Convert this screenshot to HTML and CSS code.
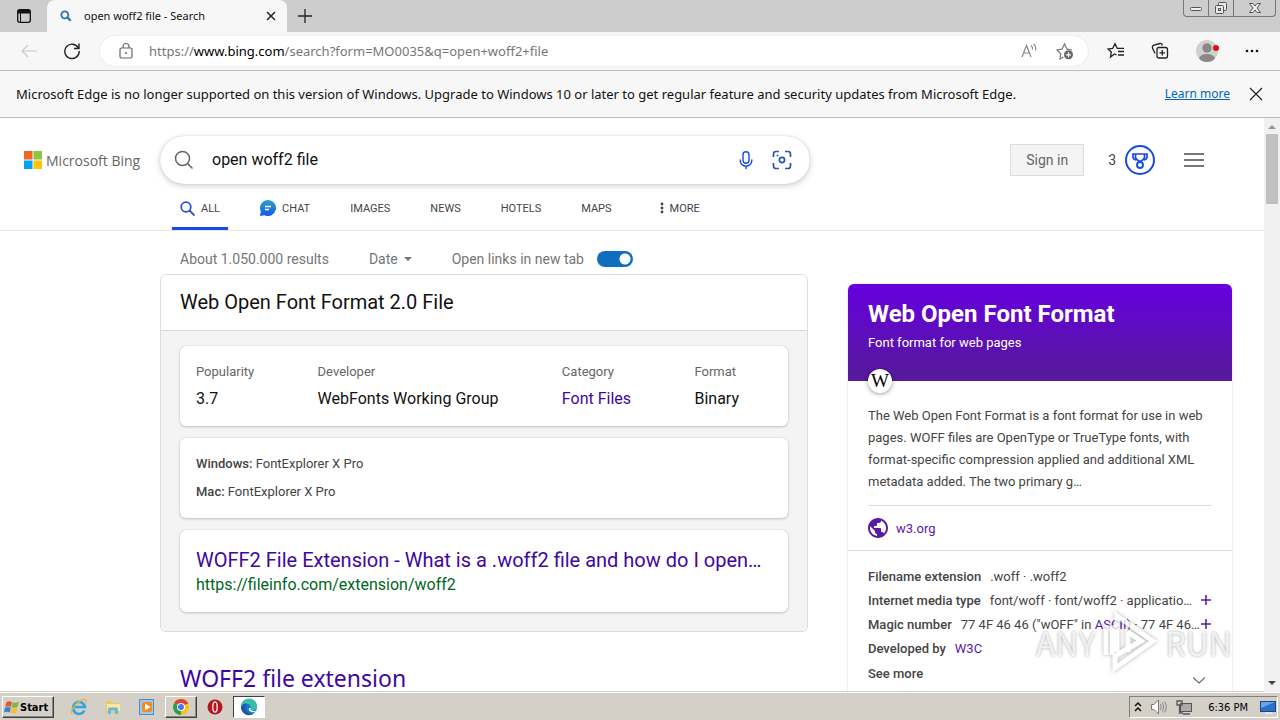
FILE: index.html
```html
<!DOCTYPE html>
<html lang="en">
<head>
  <meta charset="UTF-8">
  <meta name="viewport" content="width=device-width, initial-scale=1.0">
  <title>open woff2 file - Search</title>
  <link rel="stylesheet" href="styles.css">
</head>
<body>
  <!-- Browser tabs -->
  <div class="tab-bar">
    <button class="tab-actions" aria-label="Tab actions">
      <svg width="16" height="16" viewBox="0 0 16 16"><rect x="1.700" y="1.700" width="12.600" height="12.600" rx="2" fill="none" stroke="#111" stroke-width="1.300"/><path d="M2 2h12v3.500H2z" fill="#111"/><path d="M4.500 5v9" stroke="#111"/></svg>
    </button>
    <div class="tab">
      <svg width="12" height="12" viewBox="0 0 12 12"><circle cx="4.800" cy="4.800" r="3.500" fill="none" stroke="#2f73b8" stroke-width="1.800"/><path d="M7.400 7.400l3.300 3.300" stroke="#2f73b8" stroke-width="2.200"/></svg>
      <span class="tab-title">open woff2 file - Search</span>
      <button class="icon-btn" aria-label="Close tab">
        <svg width="10" height="10" viewBox="0 0 10 10"><path d="M1 1l8 8M9 1L1 9" stroke="#222" stroke-width="1.500"/></svg>
      </button>
    </div>
    <button class="new-tab" aria-label="New tab">
      <svg width="16" height="16" viewBox="0 0 16 16"><path d="M8 1v14M1 8h14" stroke="#222" stroke-width="1.300"/></svg>
    </button>
    <div class="window-controls">
      <button aria-label="Minimize"><svg width="14" height="12" viewBox="0 0 14 12"><rect x="1.500" y="5.500" width="11" height="3" rx="1" fill="#eee" stroke="#555"/></svg></button>
      <button aria-label="Restore"><svg width="14" height="14" viewBox="0 0 14 14"><g fill="#e8e8e8" stroke="#555"><rect x="4.500" y="1.500" width="8" height="8" rx="1"/><rect x="1.500" y="4.500" width="8" height="8" rx="1"/><rect x="4.500" y="7.500" width="2" height="2"/></g></svg></button>
      <button class="wide" aria-label="Close window"><svg width="14" height="12" viewBox="0 0 14 12"><path d="M1.500 1.500h3.500l2 2.500 2-2.500h3.500L9 6l3.500 4.500H9L7 8l-2 2.500H1.500L5 6z" fill="#eee" stroke="#555"/></svg></button>
    </div>
  </div>

  <!-- Address bar -->
  <div class="toolbar">
    <button class="icon-btn" aria-label="Back">
      <svg width="18" height="16" viewBox="0 0 18 16"><path d="M17 8H2M8 2L2 8l6 6" fill="none" stroke="#ccc" stroke-width="1.200"/></svg>
    </button>
    <button class="icon-btn" aria-label="Refresh">
      <svg width="18" height="18" viewBox="0 0 18 18"><path d="M15.500 6.200A7.200 7.200 0 1 0 16.200 9M16 1.500v5h-5" fill="none" stroke="#222" stroke-width="1.400"/></svg>
    </button>
    <div class="address">
      <svg width="16" height="18" viewBox="0 0 16 18"><rect x="2" y="6" width="12" height="10" rx="1.500" fill="none" stroke="#666" stroke-width="1.200"/><path d="M5 6V4.500a3 3 0 0 1 6 0V6" fill="none" stroke="#666" stroke-width="1.200"/><circle cx="8" cy="11" r="1" fill="#666"/></svg>
      <span class="url">https://<b>www.bing.com</b>/search?form=MO0035&amp;q=open+woff2+file</span>
      <button class="icon-btn" aria-label="Read aloud">
        <svg width="18" height="18" viewBox="0 0 18 18"><path d="M2 15L6.500 3.500 11 15M3.600 11h5.800M11 3.500q2 1.500 1.500 4M13.500 2q3 2.500 2 6.500" fill="none" stroke="#888" stroke-width="1.200"/></svg>
      </button>
      <button class="icon-btn" aria-label="Add to favorites">
        <svg width="18" height="18" viewBox="0 0 18 18"><path d="M7.500 15l-3.500 2 .8-5.200L1 8l5-.8L8.500 2 11 7.200l5 .8" fill="none" stroke="#777" stroke-width="1.200"/><circle cx="12.500" cy="12.800" r="4.500" fill="#666"/><path d="M12.500 10.300v5M10 12.800h5" stroke="#fff" stroke-width="1.200"/></svg>
      </button>
    </div>
    <div class="toolbar-actions">
      <button class="icon-btn" aria-label="Favorites">
        <svg width="18" height="18" viewBox="0 0 18 18"><path d="M9.500 13L7.500 12 3.500 15l.8-5L1 7l4.700-.7L8 1.800l2.200 4.500H17M11 9.500h6M11 13h6" fill="none" stroke="#222" stroke-width="1.300"/></svg>
      </button>
      <button class="icon-btn" aria-label="Collections">
        <svg width="18" height="18" viewBox="0 0 18 18"><path d="M4 11.500L1.500 6q-.5-2 1.500-2.800L9 1.500q2-.3 2.500 2" fill="none" stroke="#222" stroke-width="1.300"/><rect x="6" y="5.500" width="10.500" height="10.500" rx="2" fill="#f7f7f7" stroke="#222" stroke-width="1.300"/><path d="M11.200 8v5.500M8.500 10.800H14" stroke="#222" stroke-width="1.300"/></svg>
      </button>
      <button class="icon-btn" aria-label="Profile">
        <svg width="24" height="24" viewBox="0 0 24 24"><clipPath id="avatar"><circle cx="12" cy="12" r="11"/></clipPath><circle cx="12" cy="12" r="11" fill="#d2d0ce"/><g clip-path="url(#avatar)" fill="#8a8886"><circle cx="12" cy="9" r="4.700"/><ellipse cx="12" cy="20" rx="8" ry="5"/></g><circle cx="21" cy="9" r="3" fill="#d8101c"/></svg>
      </button>
      <button class="icon-btn" aria-label="Settings and more">
        <svg width="14" height="4" viewBox="0 0 14 4"><g fill="#111"><circle cx="2" cy="2" r="1.300"/><circle cx="7" cy="2" r="1.300"/><circle cx="12" cy="2" r="1.300"/></g></svg>
      </button>
    </div>
  </div>

  <div class="notice">
    <span class="notice-text">Microsoft Edge is no longer supported on this version of Windows. Upgrade to Windows 10 or later to get regular feature and security updates from Microsoft Edge.</span>
    <a href="#">Learn more</a>
    <button class="icon-btn" aria-label="Dismiss">
      <svg width="14" height="14" viewBox="0 0 14 14"><path d="M1 1l12 12M13 1L1 13" stroke="#222" stroke-width="1.200"/></svg>
    </button>
  </div>

  <div class="viewport">
    <div class="page">
      <header class="page-header">
        <div class="header-top">
          <a class="logo" href="#">
            <svg width="18" height="18" viewBox="0 0 19 19"><path d="M0 0h9v9H0z" fill="#f26522"/><path d="M10 0h9v9h-9z" fill="#8dc63f"/><path d="M0 10h9v9H0z" fill="#00a4ef"/><path d="M10 10h9v9h-9z" fill="#ffc20e"/></svg>
            <span>Microsoft Bing</span>
          </a>
          <form class="search-box">
            <svg width="20" height="20" viewBox="0 0 20 20"><circle cx="8.500" cy="8.500" r="7" fill="none" stroke="#666" stroke-width="1.500"/><path d="M13.500 13.500l5 5" stroke="#666" stroke-width="1.600"/></svg>
            <input type="text" value="open woff2 file" aria-label="Search">
            <button type="button" class="icon-btn" aria-label="Search using voice">
              <svg width="20" height="20" viewBox="0 0 20 20"><rect x="7" y="1.700" width="6" height="11.500" rx="3" fill="none" stroke="#174ae4" stroke-width="1.400"/><path d="M4.200 9.500v1a5.800 5.800 0 0 0 11.600 0v-1M10 16.300V19" fill="none" stroke="#174ae4" stroke-width="1.400"/></svg>
            </button>
            <button type="button" class="icon-btn" aria-label="Search using an image">
              <svg width="20" height="20" viewBox="0 0 20 20"><path d="M1.500 7V4q0-2.500 2.500-2.500h3M13 1.500h3q2.500 0 2.500 2.500v3M18.500 13v3q0 2.500-2.500 2.500h-3M7 18.500H4q-2.500 0-2.500-2.500v-3" fill="none" stroke="#2a55b8" stroke-width="1.700"/><circle cx="10" cy="10" r="2.600" fill="none" stroke="#2a55b8" stroke-width="1.700"/><circle cx="5.500" cy="5.500" r="1" fill="#2a55b8"/></svg>
            </button>
          </form>
          <div class="account">
            <button class="sign-in">Sign in</button>
            <button class="rewards"><span>3</span>
              <svg width="30" height="30" viewBox="0 0 30 30"><g fill="none" stroke="#174ae4"><circle cx="15" cy="15" r="14" stroke-width="2"/><path d="M10.500 9h9v3.500q-1 3-4.500 4-3.500-1-4.500-4zM10.500 9H8v3.500q.5 2 3 2.500M19.500 9H22v3.500q-.5 2-3 2.500" stroke-width="1.700"/><circle cx="15" cy="20" r="3" stroke-width="1.900"/></g></svg>
            </button>
            <button class="icon-btn" aria-label="Menu">
              <svg width="20" height="14" viewBox="0 0 20 14"><path d="M0 1h20M0 7h20M0 13h20" stroke="#767676" stroke-width="2"/></svg>
            </button>
          </div>
        </div>
        <nav class="scopes">
          <a class="active" href="#"><svg width="15" height="15" viewBox="0 0 15 15"><circle cx="6" cy="6" r="4.800" fill="none" stroke="#2a4fd0" stroke-width="1.700"/><path d="M9.500 9.500l5 5" stroke="#2a4fd0" stroke-width="1.900"/></svg>All</a>
          <a href="#"><svg width="16" height="16" viewBox="0 0 16 16"><defs><linearGradient id="chat" x1="0" y1="0" x2="0" y2="1"><stop offset="0" stop-color="#2aa7b8"/><stop offset="1" stop-color="#1557f0"/></linearGradient></defs><path d="M8 0a8 8 0 1 1-3.500 15.200L0 16l.8-4.500A8 8 0 0 1 8 0z" fill="url(#chat)"/><path d="M5 6.500h6M5 9.500h4" stroke="#fff" stroke-width="1.300"/></svg>Chat</a>
          <a href="#">Images</a>
          <a href="#">News</a>
          <a href="#">Hotels</a>
          <a href="#">Maps</a>
          <a class="more" href="#"><svg width="4" height="12" viewBox="0 0 4 12"><g fill="#444"><circle cx="2" cy="2" r="1.400"/><circle cx="2" cy="6" r="1.400"/><circle cx="2" cy="10" r="1.400"/></g></svg>More</a>
        </nav>
      </header>

      <div class="content">
        <main class="results">
          <div class="filters">
            <span>About 1.050.000 results</span>
            <button class="date">Date <svg width="8" height="4" viewBox="0 0 8 4"><path d="M0 0h8L4 4z" fill="#767676"/></svg></button>
            <label class="switch">Open links in new tab <input type="checkbox" checked></label>
          </div>

          <section class="answer">
            <h2>Web Open Font Format 2.0 File</h2>
            <div class="answer-body">
              <dl class="box facts">
                <div><dt>Popularity</dt><dd>3.7</dd></div>
                <div><dt>Developer</dt><dd>WebFonts Working Group</dd></div>
                <div><dt>Category</dt><dd><a href="#">Font Files</a></dd></div>
                <div><dt>Format</dt><dd>Binary</dd></div>
              </dl>
              <div class="box programs">
                <p><b>Windows:</b> FontExplorer X Pro</p>
                <p><b>Mac:</b> FontExplorer X Pro</p>
              </div>
              <div class="box source">
                <h3><a href="#">WOFF2 File Extension - What is a .woff2 file and how do I open…</a></h3>
                <cite>https://fileinfo.com/extension/woff2</cite>
              </div>
            </div>
          </section>

          <h2 class="result-title"><a href="#">WOFF2 file extension</a></h2>
        </main>

        <aside class="entity">
          <div class="entity-head">
            <h2>Web Open Font Format</h2>
            <p>Font format for web pages</p>
            <span class="wiki">W</span>
          </div>
          <div class="entity-about">
            <p>The Web Open Font Format is a font format for use in web pages. WOFF files are OpenType or TrueType fonts, with format-specific compression applied and additional XML metadata added. The two primary g…</p>
            <a class="site" href="#">
              <svg width="20" height="20" viewBox="2 2 20 20"><path d="M12 2C6.480 2 2 6.480 2 12s4.480 10 10 10 10-4.480 10-10S17.520 2 12 2zm-1 17.930c-3.950-.49-7-3.850-7-7.930 0-.62.080-1.210.210-1.790L9 15v1c0 1.100.9 2 2 2v1.930zm6.900-2.540c-.26-.81-1-1.390-1.900-1.390h-1v-3c0-.55-.45-1-1-1H8v-2h2c.55 0 1-.45 1-1V7h2c1.100 0 2-.9 2-2v-.41c2.930 1.190 5 4.060 5 7.410 0 2.080-.8 3.970-2.100 5.390z" fill="#5a1aa8"/></svg>
              w3.org
            </a>
          </div>
          <div class="entity-facts">
            <div class="fact"><b>Filename extension</b><span>.woff · .woff2</span></div>
            <div class="fact"><b>Internet media type</b><span>font/woff · font/woff2 · applicatio…</span><button class="plus" aria-label="Expand media type"><svg width="10" height="10" viewBox="0 0 10 10"><path d="M5 0v10M0 5h10" stroke="#5a1aa8" stroke-width="1.500"/></svg></button></div>
            <div class="fact"><b>Magic number</b><span>77 4F 46 46 ("wOFF" in <a href="#">ASCII</a>) · 77 4F 46…</span><button class="plus" aria-label="Expand magic number"><svg width="10" height="10" viewBox="0 0 10 10"><path d="M5 0v10M0 5h10" stroke="#5a1aa8" stroke-width="1.500"/></svg></button></div>
            <div class="fact"><b>Developed by</b><span><a href="#">W3C</a></span></div>
            <button class="see-more">See more <svg width="12" height="7" viewBox="0 0 12 7"><path d="M0 .5l6 5.500 6-5.500" fill="none" stroke="#666" stroke-width="1.200"/></svg></button>
          </div>
        </aside>
      </div>
    </div>

    <div class="scrollbar">
      <svg width="8" height="16" viewBox="0 0 8 16"><path d="M0 11h8L4 7z" fill="#999"/></svg>
      <div class="thumb"></div>
      <svg width="8" height="16" viewBox="0 0 8 16"><path d="M0 5h8L4 9z" fill="#444"/></svg>
    </div>

    <div class="watermark">
      <span>ANY</span>
      <svg width="58" height="64" viewBox="0 0 58 64"><g fill="none" stroke="#fff" stroke-width="5"><path d="M5 45V18h6v27M16 42V6l36 25-38 27V46l26-15-13-9v20"/></g></svg>
      <span>RUN</span>
    </div>
  </div>

  <!-- Windows taskbar -->
  <footer class="taskbar">
    <button class="start">
      <svg width="16" height="16" viewBox="0 0 16 16"><path d="M2.500 3Q5 1.500 8 3L7 8Q4 6.500 1.200 8z" fill="#e8572a"/><path d="M8.800 3.200q3 1.300 6-.2l-1.200 5q-3 1.500-5.800.2z" fill="#7db83c"/><path d="M1 8.800q3-1.500 5.800 0l-1 4.700Q3 12 0 13.500z" fill="#2f86d8"/><path d="M7.600 9q3 1.300 5.800 0l-1.200 4.800q-3 1.300-5.600-.1z" fill="#f8bc28"/></svg>
      Start
    </button>
    <div class="launchers">
      <button aria-label="Internet Explorer"><svg width="18" height="18" viewBox="0 0 18 18"><path d="M14.500 12.500A6 6 0 1 1 15 9H4.500" fill="none" stroke="#36a3e0" stroke-width="2.600"/><path d="M2 16C-1 13 8 2 14 1.500q3 0 2 3.500" fill="none" stroke="#e5b93b" stroke-width="1.300"/></svg></button>
      <button aria-label="Explorer"><svg width="18" height="18" viewBox="0 0 18 18"><path d="M2 3h6l1 2h6v10H2z" fill="#e8c964"/><path d="M3 6h13v7H3z" fill="#f8e8a0"/><path d="M4 16v-5q0-1.500 1.500-1.500h7Q14 9.500 14 11v5h-3v-3.500H7V16z" fill="#6db6dc"/></svg></button>
      <button aria-label="Media Player"><svg width="18" height="18" viewBox="0 0 18 18"><rect x="1.500" y="1.500" width="14" height="15" fill="#9ec9ee" stroke="#4f8cc6"/><rect x="4" y="4" width="10" height="10" rx="2" fill="#f28a1c"/><path d="M7 5.500l5.500 3.500L7 12.500z" fill="#fff"/></svg></button>
      <button class="raised" aria-label="Chrome"><svg width="18" height="18" viewBox="0 0 18 18"><circle cx="9" cy="9" r="8" fill="#f9c315"/><path d="M9 9L2.100 5A8 8 0 0 1 16 5z" fill="#dd4436"/><path d="M9 9l0 8A8 8 0 0 1 2.100 5z" fill="#2a9f50"/><path d="M9 5h7v1H9z" fill="#dd4436"/><circle cx="9" cy="9" r="4" fill="#fff"/><circle cx="9" cy="9" r="3" fill="#3e7ee8"/></svg></button>
      <button aria-label="Opera"><svg width="18" height="18" viewBox="0 0 18 18"><circle cx="9" cy="9" r="7.500" fill="#b51720"/><ellipse cx="9" cy="9" rx="2.200" ry="5" fill="#b51720" stroke="#f5dada" stroke-width="1.500"/></svg></button>
      <button class="pressed" aria-label="Edge"><svg width="18" height="18" viewBox="0 0 18 18"><circle cx="9" cy="9" r="8" fill="#1678c8"/><path d="M1 9A8 8 0 0 1 17 8q.5 4-4 4-3 0-2.500-2Q11 6 7 6 3 6 1 9z" fill="#35bfa8"/><path d="M1 9q2-4 6-3.500Q3.500 9 6.500 13q2 3 6.500 3A8 8 0 0 1 1 9z" fill="#1b58a5"/><path d="M10.500 10q-.5 2.500 3 3 2 0 3-1-2 3-5 2-3.500-1-2.500-4z" fill="#fff"/></svg></button>
    </div>
    <div class="tray">
      <svg width="8" height="12" viewBox="0 0 8 12"><path d="M1 5l3-3 3 3M1 10l3-3 3 3" fill="none" stroke="#111" stroke-width="1.500"/></svg>
      <svg width="18" height="16" viewBox="0 0 18 16"><path d="M1.500 5.500H4L8.500 1v14L4 10.500H1.500z" fill="#fff" stroke="#777"/><path d="M10.500 5q1.500 3 0 6M12.500 3.500q2.500 4.500 0 9M14.500 2.500q3.500 5.500 0 11" fill="none" stroke="#888"/></svg>
      <svg width="16" height="16" viewBox="0 0 16 16"><rect x="4.500" y="4.500" width="11" height="8" fill="#aaa" stroke="#555"/><path d="M7 15h7M1 2h5v4H1zM3.500 6v8H7" fill="none" stroke="#555" stroke-width="1.300"/></svg>
      <span class="clock">6:36 PM</span>
      <svg width="16" height="14" viewBox="0 0 16 14"><rect x=".5" y="1.500" width="15" height="10" fill="#2c70c8" stroke="#1c4584"/><path d="M1 2h14L1 8z" fill="#66a5e8"/><path d="M5 13h7" stroke="#dce8f5" stroke-width="2"/></svg>
    </div>
  </footer>
</body>
</html>
```
FILE: styles.css
```css
* {
  box-sizing: border-box;
}
body {
  margin: 0;
  height: 100vh;
  display: flex;
  flex-direction: column;
  overflow: hidden;
  background: #fff;
  font-family: Roboto, sans-serif;
  font-size: 13px;
  color: #444;
}
h2, h3, p, dl, dd {
  margin: 0;
  font-weight: normal;
}
button {
  font: inherit;
  color: inherit;
  background: none;
  border: none;
  padding: 0;
}
a {
  color: #4007a2;
  text-decoration: none;
}
svg {
  display: block;
  flex: none;
}
.icon-btn {
  display: flex;
  align-items: center;
  justify-content: center;
}

/* browser chrome */
.tab-bar,
.toolbar,
.notice {
  font-family: "Noto Sans", "Open Sans", sans-serif;
  color: #111;
  flex: none;
}
.tab-bar {
  height: 32px;
  display: flex;
  background: #cdcdcd;
}
.tab-actions {
  width: 47px;
  padding-left: 16px;
}
.tab {
  width: 240px;
  display: flex;
  align-items: center;
  gap: 12px;
  padding: 0 11px 1px 13px;
  background: #f7f7f7;
  border-radius: 8px 8px 0 0;
  font-size: 11px;
}
.tab-title {
  flex: 1;
}
.new-tab {
  padding: 0 10px;
}
.window-controls {
  display: flex;
  height: 17px;
  margin-left: auto;
  margin-right: 4px;
  border: 1px solid #777;
  border-top: none;
  border-radius: 0 0 4px 4px;
}
.window-controls button {
  width: 25px;
  display: flex;
  align-items: center;
  justify-content: center;
  border-right: 1px solid #777;
}
.window-controls .wide {
  width: 41px;
  border-right: none;
}
.toolbar {
  height: 39px;
  display: flex;
  align-items: center;
  padding: 0 21px 0 20px;
  background: #f7f7f7;
  border-bottom: 1px solid #bbb;
}
.toolbar > .icon-btn {
  margin-right: 25px;
}
.toolbar > .icon-btn + .icon-btn {
  margin-right: 19px;
}
.address {
  flex: 1;
  height: 30px;
  display: flex;
  align-items: center;
  gap: 18px;
  padding: 0 14px 0 18px;
  background: #fff;
  border-radius: 15px;
  box-shadow: 0 0 2px #ddd;
}
.url {
  flex: 1;
  margin-left: -3px;
  color: #777;
}
.url b {
  font-weight: normal;
  color: #000;
}
.toolbar-actions {
  display: flex;
  align-items: center;
  gap: 26px;
  margin-left: 19px;
}
.notice {
  height: 47px;
  display: flex;
  align-items: center;
  padding: 0 17px 1px 16px;
  background: #f7f7f7;
  border-bottom: 1px solid #bbb;
  font-size: 12px;
}
.notice-text {
  flex: 1;
  font-size: 13px;
  white-space: nowrap;
}
.notice a {
  margin-right: 19px;
  color: #0067b8;
  text-decoration: underline;
}

/* search page */
.viewport {
  position: relative;
  flex: 1;
  min-height: 0;
  display: flex;
}
.page {
  flex: 1;
  min-width: 0;
  overflow: hidden;
}
.page-header {
  height: 113px;
  padding-top: 18px;
  border-bottom: 1px solid #e5e5e5;
}
.header-top {
  display: flex;
  align-items: center;
  padding: 0 60px 0 24px;
}
.logo {
  width: 136px;
  display: flex;
  align-items: center;
  gap: 4px;
  font-family: "Open Sans", sans-serif;
  font-size: 14px;
  font-weight: 500;
  color: #666;
  white-space: nowrap;
}
.search-box {
  width: 650px;
  height: 48px;
  display: flex;
  align-items: center;
  padding: 0 18px 0 14px;
  gap: 16px;
  border-radius: 24px;
  box-shadow: 0 0 1px rgba(0, 0, 0, 0.3), 0 2px 6px rgba(0, 0, 0, 0.18);
}
.search-box input {
  flex: 1;
  min-width: 0;
  padding: 0 2px 2px;
  border: none;
  outline: none;
  background: none;
  font: 16px Roboto, sans-serif;
  color: #111;
}
.account {
  display: flex;
  align-items: center;
  margin-left: auto;
}
.sign-in {
  height: 32px;
  padding: 0 15px;
  border: 1px solid #ddd;
  background: #f4f4f4;
  font-size: 14px;
  color: #666;
}
.rewards {
  display: flex;
  align-items: center;
  gap: 9px;
  margin: 0 29px 0 24px;
  font-size: 14px;
}
.scopes {
  display: flex;
  gap: 24px;
  padding-left: 172px;
}
.scopes a {
  display: flex;
  align-items: center;
  gap: 6px;
  height: 46px;
  padding: 5px 8px 0;
  border-bottom: 3px solid transparent;
  font-size: 11px;
  text-transform: uppercase;
  color: #444;
}
.scopes .active {
  border-color: #174ae4;
}
.scopes .more {
  margin-left: 8px;
}
.content {
  display: flex;
  align-items: flex-start;
  gap: 40px;
  padding: 0 32px 0 160px;
}
.results {
  width: 648px;
}
.filters {
  display: flex;
  align-items: center;
  height: 43px;
  padding: 13px 20px 0;
  gap: 40px;
  font-size: 14px;
  color: #767676;
}
.date {
  display: flex;
  align-items: center;
  gap: 6px;
}
.switch {
  display: flex;
  align-items: center;
  gap: 13px;
}
.switch input {
  appearance: none;
  width: 36px;
  height: 16px;
  margin: 0;
  border-radius: 8px;
  background: radial-gradient(circle at 28px 8px, #fff 5px, #106ebe 6px);
}
.answer {
  border: 1px solid #ddd;
  border-radius: 6px;
  background: #f4f4f4;
  overflow: hidden;
}
.answer > h2 {
  padding: 15px 19px 16px;
  background: #fff;
  border-bottom: 1px solid #ddd;
  font-size: 20px;
  line-height: 24px;
  color: #111;
}
.answer-body {
  display: flex;
  flex-direction: column;
  gap: 12px;
  padding: 15px 19px 19px;
}
.box {
  padding: 0 16px;
  background: #fff;
  border-radius: 6px;
  box-shadow: 0 0 1px rgba(0, 0, 0, 0.2), 0 1px 3px rgba(0, 0, 0, 0.2);
}
.facts {
  display: flex;
  justify-content: space-between;
  padding: 16px 49px 15px 16px;
}
.facts dt {
  margin-bottom: 5px;
  line-height: 20px;
  color: #666;
}
.facts dd {
  font-size: 16px;
  line-height: 24px;
  color: #111;
}
.programs {
  padding-top: 12px;
  padding-bottom: 12px;
}
.programs p {
  line-height: 28px;
}
.programs b,
.fact b {
  font-weight: 500;
}
.source {
  padding-top: 18px;
  padding-bottom: 15px;
}
.source h3 {
  font-size: 20px;
  line-height: 24px;
  white-space: nowrap;
}
.source cite {
  display: block;
  margin-top: 1px;
  font-size: 16px;
  font-style: normal;
  line-height: 24px;
  color: #006621;
}
.result-title {
  margin: 33px 20px 0;
  font: 23px/26px "Noto Sans", sans-serif;
}

/* entity card */
.entity {
  flex: 1;
  min-width: 0;
  margin-top: 53px;
  border-radius: 6px;
  box-shadow: 0 0 2px rgba(0, 0, 0, 0.2);
}
.entity a {
  color: #5a1aa8;
}
.entity-head {
  position: relative;
  height: 97px;
  padding: 14px 20px 0;
  background: linear-gradient(#6600e0, #551a98);
  border-radius: 6px 6px 0 0;
  color: #fff;
}
.entity-head h2 {
  font-size: 24px;
  font-weight: 700;
  line-height: 32px;
}
.entity-head p {
  margin-top: 3px;
  line-height: 20px;
}
.wiki {
  position: absolute;
  left: 20px;
  bottom: -12px;
  width: 24px;
  height: 24px;
  border-radius: 50%;
  background: #fff;
  box-shadow: 0 1px 4px rgba(0, 0, 0, 0.4);
  font: 19px/24px "Liberation Serif", serif;
  text-align: center;
  color: #000;
}
.entity-about {
  padding: 24px 20px 0;
  border-bottom: 1px solid #ddd;
}
.entity-about p {
  padding-bottom: 12px;
  border-bottom: 1px solid #ddd;
  line-height: 22px;
}
.site {
  display: flex;
  align-items: center;
  gap: 8px;
  height: 44px;
}
.entity-facts {
  padding: 13px 20px;
}
.fact {
  display: flex;
  align-items: center;
  height: 24px;
  white-space: nowrap;
}
.fact b {
  margin-right: 9px;
}
.plus {
  margin-left: auto;
  padding-right: 1px;
}
.see-more {
  width: 100%;
  display: flex;
  justify-content: space-between;
  align-items: flex-end;
  padding: 4px 7px 0 0;
  font-weight: 500;
  line-height: 20px;
}

.scrollbar {
  width: 16px;
  display: flex;
  flex-direction: column;
  align-items: center;
  background: #f1f1f1;
}
.thumb {
  width: 12px;
  height: 70px;
  margin-bottom: auto;
  background: #c1c1c1;
}
.watermark {
  position: absolute;
  right: 48px;
  bottom: 18px;
  display: flex;
  align-items: center;
  gap: 6px;
  font: 32px/48px "Noto Sans CJK SC", sans-serif;
  color: rgba(255, 255, 255, 0.75);
  text-shadow: 0 0 3px rgba(0, 0, 0, 0.35);
  pointer-events: none;
}
.watermark svg {
  opacity: 0.75;
  filter: drop-shadow(0 0 2px rgba(0, 0, 0, 0.4));
}

/* taskbar */
.taskbar {
  height: 28px;
  flex: none;
  display: flex;
  align-items: center;
  padding: 1px 2px 0;
  background: #d4d0c8;
  border-top: 1px solid #fff;
  box-shadow: 0 -1px 0 #d4d0c8;
  font-family: "DejaVu Sans Condensed", "DejaVu Sans", sans-serif;
  font-size: 11px;
  color: #000;
}
.start,
.raised {
  border: 1px solid;
  border-color: #fff #404040 #404040 #fff;
  box-shadow: inset -1px -1px 0 #888;
}
.start {
  display: flex;
  align-items: center;
  height: 22px;
  width: 52px;
  padding-left: 1px;
  font-weight: bold;
}
.launchers {
  display: flex;
  gap: 2px;
  margin-left: 9px;
}
.launchers button {
  width: 32px;
  height: 22px;
  display: flex;
  align-items: center;
  justify-content: center;
}
.launchers .pressed {
  background: #fff;
  border: 1px solid;
  border-color: #404040 #fff #fff #404040;
}
.tray {
  display: flex;
  align-items: center;
  gap: 8px;
  height: 22px;
  margin-left: auto;
  padding: 0 1px 0 4px;
  border: 1px solid;
  border-color: #808080 #fff #fff #808080;
}
.clock {
  padding: 0 4px 0 8px;
}
```
